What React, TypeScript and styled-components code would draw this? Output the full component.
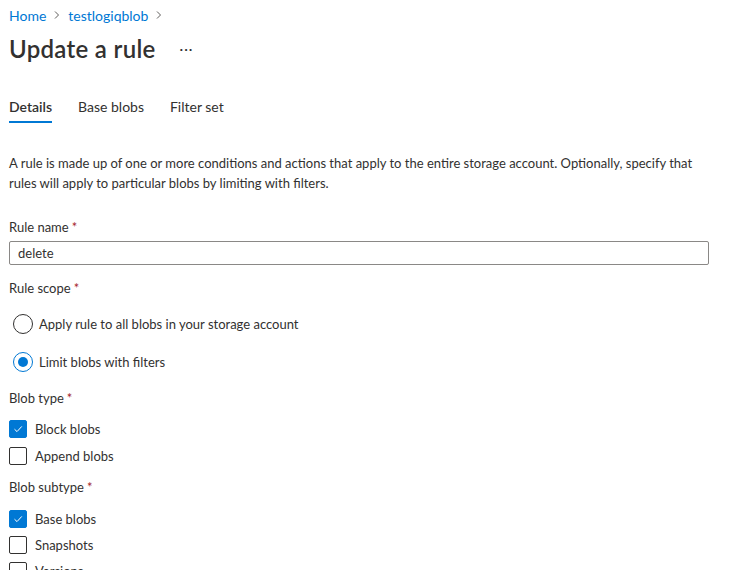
import React, { useState } from 'react'
import styled, { createGlobalStyle } from 'styled-components'

const GlobalStyle = createGlobalStyle`
  html, body {
    margin: 0;
    padding: 0;
    background: #ffffff;
  }
  body {
    font-family: 'Segoe UI', Lato, 'Noto Sans', sans-serif;
    color: #323130;
    -webkit-font-smoothing: antialiased;
  }
`

const Page = styled.div`
  padding: 0 9px;
  width: 700px;
`

const Breadcrumb = styled.nav`
  display: flex;
  align-items: center;
  gap: 6px;
  height: 30px;
  font-size: 14px;
`

const Crumb = styled.a`
  color: #0078d4;
  text-decoration: none;
`

const Chevron = styled.svg`
  width: 10px;
  height: 10px;
  color: #605e5c;
`

const TitleRow = styled.div`
  display: flex;
  align-items: center;
  height: 36px;
`

const Title = styled.h1`
  margin: 0;
  font-size: 24px;
  font-weight: 600;
  letter-spacing: 0.3px;
  color: #323130;
`

const More = styled.span`
  margin-left: 24px;
  font-size: 14px;
  color: #323130;
  letter-spacing: 1px;
`

const Tabs = styled.div`
  display: flex;
  gap: 26px;
  margin-top: 30px;
`

const Tab = styled.div<{ $active?: boolean }>`
  position: relative;
  height: 32px;
  line-height: 22px;
  font-size: 14px;
  font-weight: ${(p) => (p.$active ? 600 : 400)};
  color: #323130;
  cursor: pointer;
  &::after {
    content: '';
    display: ${(p) => (p.$active ? 'block' : 'none')};
    position: absolute;
    left: 0;
    right: 0;
    bottom: 5px;
    height: 2px;
    background: #0078d4;
  }
`

const Intro = styled.p`
  margin: 25px 0 0;
  font-size: 13px;
  line-height: 20px;
  color: #323130;
  width: 720px;
`

const Field = styled.div<{ $top: number }>`
  margin-top: ${(p) => p.$top}px;
`

const Label = styled.div<{ $gap?: number }>`
  font-size: 13px;
  line-height: 20px;
  margin-bottom: ${(p) => p.$gap ?? 4}px;
`

const Required = styled.span`
  color: #a4262c;
  margin-left: 3px;
`

const TextBox = styled.input`
  font-family: inherit;
  box-sizing: border-box;
  width: 700px;
  height: 24px;
  border: 1px solid #8a8886;
  border-radius: 2px;
  padding: 0 8px;
  font-size: 13px;
  color: #323130;
  outline: none;
`

const Options = styled.div<{ $gap: number }>`
  display: flex;
  flex-direction: column;
  gap: ${(p) => p.$gap}px;
`

const RadioRow = styled.label`
  display: flex;
  align-items: center;
  gap: 6px;
  padding-left: 4px;
  height: 22px;
  font-size: 13px;
  cursor: pointer;
`

const RadioCircle = styled.span<{ $checked: boolean }>`
  box-sizing: border-box;
  width: 20px;
  height: 20px;
  border-radius: 50%;
  border: 1px solid ${(p) => (p.$checked ? '#0078d4' : '#323130')};
  display: flex;
  align-items: center;
  justify-content: center;
  &::after {
    content: '';
    display: ${(p) => (p.$checked ? 'block' : 'none')};
    width: 10px;
    height: 10px;
    border-radius: 50%;
    background: #0078d4;
  }
`

const CheckRow = styled.label`
  display: flex;
  align-items: center;
  gap: 8px;
  height: 20px;
  font-size: 13px;
  cursor: pointer;
`

const CheckBox = styled.span<{ $checked: boolean }>`
  box-sizing: border-box;
  width: 18px;
  height: 18px;
  border-radius: 2px;
  border: 1px solid ${(p) => (p.$checked ? '#0078d4' : '#323130')};
  background: ${(p) => (p.$checked ? '#0078d4' : '#ffffff')};
  display: flex;
  align-items: center;
  justify-content: center;
  color: #ffffff;
`

const ChevronRight = () => (
  <Chevron viewBox="0 0 10 10">
    <path d="M3 1.5 L6.5 5 L3 8.5" fill="none" stroke="currentColor" strokeWidth="1" />
  </Chevron>
)

const Check = () => (
  <svg width="12" height="12" viewBox="0 0 12 12">
    <path d="M2.5 6.2 L5 8.6 L9.8 3.4" fill="none" stroke="currentColor" strokeWidth="1" />
  </svg>
)

const App = () => {
  const [scope, setScope] = useState('filter')
  const [types, setTypes] = useState<Record<string, boolean>>({
    block: true,
    append: false,
    base: true,
    snapshots: false,
    versions: false,
  })
  const toggle = (k: string) => setTypes((t) => ({ ...t, [k]: !t[k] }))

  const checkItem = (key: string, label: string) => (
    <CheckRow key={key} onClick={() => toggle(key)}>
      <CheckBox $checked={types[key]}>{types[key] && <Check />}</CheckBox>
      {label}
    </CheckRow>
  )

  return (
    <>
      <GlobalStyle />
      <Page>
        <Breadcrumb>
          <Crumb href="#">Home</Crumb>
          <ChevronRight />
          <Crumb href="#">testlogiqblob</Crumb>
          <ChevronRight />
        </Breadcrumb>
        <TitleRow>
          <Title>Update a rule</Title>
          <More>···</More>
        </TitleRow>
        <Tabs>
          <Tab $active>Details</Tab>
          <Tab>Base blobs</Tab>
          <Tab>Filter set</Tab>
        </Tabs>
        <Intro>
          A rule is made up of one or more conditions and actions that apply to the entire storage
          account. Optionally, specify that
          <br />
          rules will apply to particular blobs by limiting with filters.
        </Intro>
        <Field $top={24}>
          <Label>
            Rule name<Required>*</Required>
          </Label>
          <TextBox defaultValue="delete" />
        </Field>
        <Field $top={13}>
          <Label $gap={15}>
            Rule scope<Required>*</Required>
          </Label>
          <Options $gap={16}>
            <RadioRow onClick={() => setScope('all')}>
              <RadioCircle $checked={scope === 'all'} />
              Apply rule to all blobs in your storage account
            </RadioRow>
            <RadioRow onClick={() => setScope('filter')}>
              <RadioCircle $checked={scope === 'filter'} />
              Limit blobs with filters
            </RadioRow>
          </Options>
        </Field>
        <Field $top={15}>
          <Label $gap={11}>
            Blob type<Required>*</Required>
          </Label>
          <Options $gap={7}>
            {checkItem('block', 'Block blobs')}
            {checkItem('append', 'Append blobs')}
          </Options>
        </Field>
        <Field $top={11}>
          <Label $gap={12}>
            Blob subtype<Required>*</Required>
          </Label>
          <Options $gap={6}>
            {checkItem('base', 'Base blobs')}
            {checkItem('snapshots', 'Snapshots')}
            {checkItem('versions', 'Versions')}
          </Options>
        </Field>
      </Page>
    </>
  )
}

export default App
